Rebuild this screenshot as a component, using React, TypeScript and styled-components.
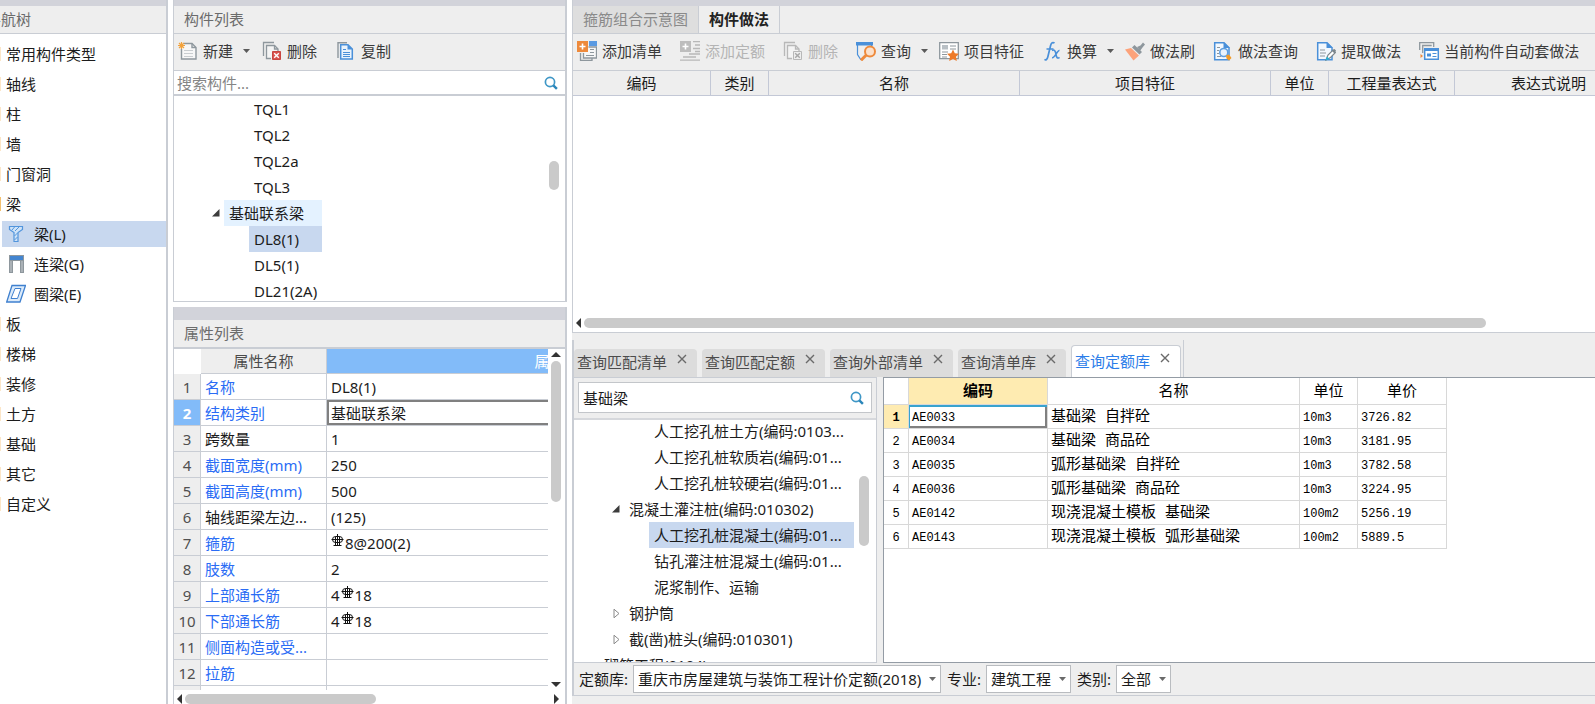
import React from "react";
import styled, { createGlobalStyle, css } from "styled-components";

const sans = `"Noto Sans", "Noto Sans CJK SC", sans-serif`;
const mono = `"Liberation Mono", "Noto Sans CJK SC", monospace`;

const c = {
  strip: "#d2d3da",
  bar: "#eeeeee",
  line: "#c9cdd4",
  lineSoft: "#d6d8dc",
  text: "#1c1c1c",
  muted: "#6b6b6b",
  select: "#c8d8ef",
  thumb: "#cacaca",
  blue: "#4a90d9",
  orange: "#ee8a3c",
  steel: "#8e979d",
};

const Global = createGlobalStyle`
  *, *::before, *::after { box-sizing: border-box; }
  body { margin: 0; background: #fff; color: ${c.text}; font: 15px/20px ${sans}; overflow: hidden; }
  button, input, select { font: inherit; color: inherit; margin: 0; }
  button { border: 0; padding: 0; background: none; white-space: nowrap; }
  h2, ul { margin: 0; padding: 0; list-style: none; font: inherit; }
  svg { display: block; flex: none; }
`;

/* ---------- shell ---------- */

const Workspace = styled.main`
  display: grid;
  grid-template-columns: 168px 394px minmax(0, 1fr);
  gap: 5px;
  height: 100vh;
  overflow: hidden;
`;

const Panel = styled.section`
  display: flex;
  flex-direction: column;
  min-height: 0;
  min-width: 0;
  border: solid ${c.line};
  border-width: 0 2px 0 1px;
  background: #fff;
`;

const NavPanel = styled(Panel)`
  margin-left: -16px;
  border-left: 0;
`;

const Stack = styled.div`
  display: grid;
  grid-template-rows: 302px minmax(0, 1fr);
  gap: 5px;
  min-height: 0;
`;

const ListPanel = styled(Panel)`
  border-bottom-width: 1px;
`;

const Strip = styled.div<{ $tall?: boolean }>`
  flex: none;
  height: ${(p) => (p.$tall ? 13 : 6)}px;
  background: ${c.strip};
`;

const PanelTitle = styled.h2<{ $inset: number }>`
  flex: none;
  height: 28px;
  padding: 3px 0 0 ${(p) => p.$inset}px;
  background: ${c.bar};
  border-bottom: 1px solid ${c.line};
  color: ${c.muted};
  white-space: nowrap;
`;

/* ---------- navigation ---------- */

const NavList = styled.ul`
  display: flex;
  flex-direction: column;
  gap: 4px;
  padding-top: 7px;
`;

const NavItem = styled.button<{ $child?: boolean; $active?: boolean }>`
  display: flex;
  align-items: center;
  gap: ${(p) => (p.$child ? 8 : 5)}px;
  width: ${(p) => (p.$child ? "calc(100% - 18px)" : "100%")};
  height: 26px;
  margin-left: ${(p) => (p.$child ? 18 : 0)}px;
  padding-left: ${(p) => (p.$child ? 4 : 3)}px;
  background: ${(p) => (p.$active ? c.select : "transparent")};
`;

const Folder = styled.span<{ $open?: boolean }>`
  width: 14px;
  height: 14px;
  background: ${(p) => (p.$open ? "#f3c070" : "#fce6c8")};
`;

/* ---------- toolbar ---------- */

const Toolbar = styled.div<{ $gap: number }>`
  flex: none;
  display: flex;
  align-items: center;
  gap: ${(p) => p.$gap}px;
  height: 37px;
  padding: 0 0 2px 4px;
  background: ${c.bar};
  border-bottom: 1px solid ${c.line};
  overflow: hidden;
`;

const ToolButton = styled.button`
  display: flex;
  align-items: center;
  gap: 5px;
  height: 28px;
  color: #3a3a3a;
  &:disabled { color: #b4b4b4; }
`;

const Split = styled.div`
  display: flex;
  align-items: center;
  gap: 10px;
`;

const DropButton = styled.button`
  width: 7px;
  height: 28px;
  margin-right: -7px;
  color: #5a5a5a;
`;

/* ---------- tree ---------- */

const SearchBar = styled.div`
  flex: none;
  display: flex;
  align-items: center;
  height: 25px;
  padding: 0 7px 0 3px;
  border-bottom: 2px solid ${c.line};
`;

const SearchInput = styled.input`
  flex: 1;
  min-width: 0;
  border: 0;
  outline: 0;
  padding: 0;
  background: transparent;
  &::placeholder { color: #858585; opacity: 1; }
`;

const Scroller = styled.div`
  flex: 1;
  display: flex;
  min-height: 0;
  overflow: hidden;
`;

const TreeArea = styled.div`
  flex: 1;
  min-width: 0;
`;

const Tree = styled.ul<{ $fit?: boolean }>`
  width: ${(p) => (p.$fit ? "fit-content" : "100%")};
  margin-top: ${(p) => (p.$fit ? 0 : -2)}px;
`;

const TreeRow = styled.li<{ $level: number }>`
  display: flex;
  align-items: center;
  height: 26px;
  padding-left: ${(p) => p.$level * 25 - 16}px;
`;

const Toggle = styled.span`
  flex: none;
  width: 16px;
  display: flex;
  justify-content: center;
`;

const TreeLabel = styled.button<{ $state?: "active" | "hover" }>`
  flex: 1;
  height: 26px;
  padding: 0 5px;
  text-align: left;
  background: ${(p) => (p.$state === "active" ? c.select : p.$state === "hover" ? "#e4f2ff" : "transparent")};
`;

/* ---------- scrollbars ---------- */

const VTrack = styled.div<{ $w: number; $before: number; $inset?: number }>`
  flex: none;
  display: flex;
  flex-direction: column;
  width: ${(p) => p.$w}px;
  padding: ${(p) => p.$before}px 0 3px ${(p) => p.$inset ?? 0}px;
`;

const VThumb = styled.span<{ $len: number }>`
  width: 10px;
  height: ${(p) => p.$len}px;
  border-radius: 5px;
  background: ${c.thumb};
`;

const ThumbSlot = styled.div`
  flex: 1;
  padding-top: 4px;
  > span { display: block; }
`;

const Spring = styled.span`
  flex: 1;
`;

const HTrack = styled.div<{ $top?: number }>`
  flex: none;
  display: flex;
  align-items: flex-start;
  gap: 3px;
  height: 14px;
  padding: ${(p) => p.$top ?? 0}px 6px 0 3px;
`;

const HThumb = styled.span<{ $w: string }>`
  width: ${(p) => p.$w};
  height: 10px;
  border-radius: 5px;
  background: ${c.thumb};
`;

/* ---------- property table ---------- */

const PropBody = styled.div`
  flex: 1;
  display: flex;
  min-height: 0;
  border-top: 1px solid ${c.line};
`;

const Clip = styled.div`
  flex: 1;
  min-width: 0;
  overflow: hidden;
`;

const PropTable = styled.table`
  table-layout: fixed;
  width: 614px;
  border-collapse: separate;
  border-spacing: 0;
  th, td {
    height: 26px;
    padding: 0 0 0 4px;
    border: solid ${c.line};
    border-width: 0 1px 1px 0;
    text-align: left;
    font-weight: 400;
    white-space: nowrap;
  }
  thead th { height: 25px; padding: 0; text-align: center; background: ${c.bar}; color: #4a4a4a; }
  thead th:first-child { background: #fff; border-color: #fff; }
  thead th:last-child { background: #82bbf9; color: #fff; }
`;

const RowNo = styled.th<{ $active?: boolean }>`
  && {
    padding: 0;
    text-align: center;
    color: #505050;
    background: ${c.bar};
    ${(p) => p.$active && css`background: #82bbf9; color: #fff; font-weight: 700;`}
  }
`;

const PropName = styled.td<{ $plain?: boolean }>`
  color: ${(p) => (p.$plain ? c.text : "#2a6cf5")};
`;

const PropValue = styled.td<{ $focus?: boolean }>`
  ${(p) => p.$focus && css`box-shadow: inset 0 0 0 2px #808080;`}
`;

const BarText = styled.span`
  display: flex;
  align-items: flex-start;
  gap: 1px;
`;

/* ---------- right side ---------- */

const RightStack = styled.div`
  display: flex;
  flex-direction: column;
  min-width: 0;
  min-height: 0;
  background: ${c.bar};
`;

const UpperPanel = styled(Panel)`
  flex: 0 0 333px;
  border-width: 0 0 1px 1px;
`;

const ViewTabs = styled.div`
  flex: none;
  display: flex;
  height: 28px;
  background: ${c.bar};
  border-bottom: 1px solid ${c.line};
`;

const ViewTab = styled.button<{ $active?: boolean }>`
  height: 27px;
  padding: 0 10px 2px;
  border-right: 1px solid ${c.line};
  background: ${(p) => (p.$active ? c.bar : "#dedede")};
  color: ${(p) => (p.$active ? "#222" : "#8a8a8a")};
  font-weight: ${(p) => (p.$active ? 600 : 400)};
`;

const MethodTable = styled.table`
  table-layout: fixed;
  width: 1070px;
  border-collapse: separate;
  border-spacing: 0;
  th {
    height: 25px;
    padding: 0;
    border: solid #c3c8d6;
    border-width: 0 1px 1px 0;
    background: ${c.bar};
    font-weight: 400;
  }
`;

const LowerPanel = styled.section`
  flex: 1;
  display: flex;
  flex-direction: column;
  min-height: 0;
  margin: 7px 0 8px;
  border-left: 2px solid ${c.line};
  border-bottom: 1px solid ${c.line};
`;

const QueryTabs = styled.div`
  flex: none;
  display: flex;
  align-items: flex-end;
  gap: 5px;
  height: 37px;
`;

const QueryTab = styled.div<{ $active?: boolean }>`
  display: flex;
  align-items: center;
  gap: 10px;
  height: ${(p) => (p.$active ? 32 : 28)}px;
  padding: 0 10px 2px 3px;
  border-radius: 4px 4px 0 0;
  background: ${(p) => (p.$active ? "#fff" : "#dcdcdc")};
  color: ${(p) => (p.$active ? "#2b7de9" : "#4c4c4c")};
  ${(p) => p.$active && css`border: solid ${c.line}; border-width: 1px 1px 0;`}
`;

const CloseButton = styled.button`
  height: 16px;
  padding-bottom: 6px;
  color: #6a6a6a;
`;

const TabEnd = styled.span`
  align-self: stretch;
  width: 1px;
  margin-left: -3px;
  background: ${c.line};
`;

const QueryBody = styled.div`
  flex: 1;
  display: grid;
  grid-template-columns: 303px minmax(0, 1fr);
  gap: 6px;
  min-height: 0;
`;

const SidePane = styled.div`
  display: flex;
  flex-direction: column;
  min-height: 0;
  border: solid ${c.line};
  border-width: 1px 1px 1px 0;
  background: #fff;
`;

const SearchHolder = styled.div`
  flex: none;
  height: 42px;
  padding: 4px 4px 6px;
  background: ${c.bar};
  border-bottom: 2px solid ${c.lineSoft};
`;

const SearchBox = styled.div`
  display: flex;
  align-items: center;
  height: 31px;
  padding: 0 7px 0 4px;
  border: 1px solid #c3c6ca;
  background: #fff;
`;

const ResultPane = styled.div`
  min-width: 0;
  overflow: hidden;
  border: solid #949ca5;
  border-width: 1px 0 1px 1px;
  background: #fff;
`;

const ResultTable = styled.table`
  table-layout: fixed;
  width: 563px;
  border-collapse: separate;
  border-spacing: 0;
  color: #000;
  font-family: ${mono};
  th, td {
    height: 24px;
    padding: 2px 0 0 3px;
    border: solid #d8d8d8;
    border-width: 0 1px 1px 0;
    text-align: left;
    font-weight: 400;
    white-space: nowrap;
  }
  thead th { height: 27px; padding: 3px 0 0; text-align: center; }
`;

const HotHead = styled.th`
  && { background: #feebb1; font-weight: 700; }
`;

const ResultNo = styled.th<{ $active?: boolean }>`
  && {
    padding: 2px 0 0;
    text-align: center;
    font-size: 12px;
    ${(p) => p.$active && css`background: #feebb1; font-weight: 700;`}
  }
`;

const Code = styled.td<{ $focus?: boolean }>`
  font-size: 12px;
  ${(p) =>
    p.$focus &&
    css`box-shadow: inset 1px 2px 0 #38a3cf, inset -2px -2px 0 #808080;`}
`;

const Footer = styled.div`
  flex: none;
  display: flex;
  align-items: center;
  gap: 6px;
  height: 32px;
  padding-left: 5px;
`;

const Field = styled.label`
  display: flex;
  align-items: center;
  gap: 5px;
`;

const SelectWrap = styled.span`
  display: grid;
  align-items: center;
  > * { grid-area: 1 / 1; }
  > svg { justify-self: end; margin-right: 5px; color: #6a6a6a; pointer-events: none; }
`;

const Select = styled.select`
  appearance: none;
  height: 28px;
  padding: 0 18px 0 4px;
  border: 1px solid #b9bcc0;
  border-radius: 0;
  background: #fff;
`;

/* ---------- drawings ---------- */

const Svg = ({ w = 20, h = w, children }: { w?: number; h?: number; children: React.ReactNode }) => (
  <svg width={w} height={h} viewBox={`0 0 ${w} ${h}`} fill="none" aria-hidden="true">
    {children}
  </svg>
);

const Caret = () => <Svg w={7} h={4}><path d="M0 0h7L3.5 4z" fill="currentColor" /></Svg>;
const Cross = () => <Svg w={10}><path d="M1 1l8 8M9 1L1 9" stroke="currentColor" strokeWidth="1.4" /></Svg>;
const Magnifier = () => (
  <Svg w={14}>
    <circle cx="6" cy="6" r="4.6" stroke="#3f97c6" strokeWidth="1.7" />
    <path d="M9.3 9.3l3.6 3.6" stroke="#2a86ba" strokeWidth="2.4" />
  </Svg>
);
const Opened = () => <Svg w={8}><path d="M7.5 0v7.5H0z" fill="#3c3c3c" /></Svg>;
const Closed = () => <Svg w={7} h={11}><path d="M1 1.2v8.6l5-4.3z" stroke="#8a8a8a" /></Svg>;
const ArrowUp = () => <Svg w={10} h={5}><path d="M0 5L5 0l5 5z" fill="#333" /></Svg>;
const ArrowDown = () => <Svg w={10} h={5}><path d="M0 0l5 5 5-5z" fill="#333" /></Svg>;
const ArrowLeft = () => <Svg w={5} h={10}><path d="M5 0L0 5l5 5z" fill="#333" /></Svg>;
const ArrowRight = () => <Svg w={5} h={10}><path d="M0 0l5 5-5 5z" fill="#333" /></Svg>;

const Rebar = () => (
  <Svg w={13} h={16}>
    <rect x="1.5" y="3.5" width="10" height="6" rx="3" stroke="#111" />
    <path d="M4.5 3.5v9M8.5 3.5v9M6.5 1v11M0.5 6.5h12M2.5 12.5h8" stroke="#111" />
  </Svg>
);

const NewIcon = () => (
  <Svg>
    <path d="M5.5 2.5H14l4 4V18H3.5V8" fill="#f7f7f7" stroke={c.steel} strokeWidth="1.4" />
    <path d="M14 2.5v4h4" stroke={c.steel} strokeWidth="1.4" />
    <path d="M6 9.5h9M6 12.5h9M6 15.5h9" stroke="#c9cdd0" />
    <path d="M3.5 1v7M0 4.5h7M1 2l5 5M6 2L1 7" stroke="#f2a23c" strokeWidth="1.2" />
  </Svg>
);
const DeleteIcon = ({ off }: { off?: boolean }) => {
  const s = off ? "#b8b8b8" : c.steel;
  return (
    <Svg>
      <path d="M1.5 15V1.5H12" stroke={s} strokeWidth="1.3" />
      <path d="M9 17.5H4.5v-13h8l3.5 3.5v2" fill="#f4f4f4" stroke={s} strokeWidth="1.3" />
      <path d="M12.5 4.5V8H16" stroke={s} strokeWidth="1.3" />
      <path d="M10.5 10.5h8v8h-8z" fill={off ? "#eee" : "#d8524e"} stroke={off ? s : "#c84541"} />
      <path d="M12.2 12.2l4.6 4.6M16.8 12.2l-4.6 4.6" stroke={off ? "#a8a8a8" : "#fff"} strokeWidth="1.4" />
    </Svg>
  );
};
const CopyIcon = () => (
  <Svg>
    <path d="M2 17V1.7h9" stroke={c.steel} strokeWidth="1.4" />
    <path d="M4.7 3.7H12l4.3 4.3v10H4.7z" fill="#eaf3fc" stroke={c.blue} strokeWidth="1.5" />
    <path d="M11.5 3.5v5h5z" fill={c.blue} />
    <path d="M7 8.5h3M7 11.5h7M7 13.5h7M7 15.5h7" stroke={c.blue} />
  </Svg>
);
const AddListIcon = () => (
  <Svg>
    <path d="M3.5 12v7.5H15V17" stroke={c.steel} strokeWidth="1.3" />
    <path d="M6.5 12v5h13V6h-8" fill="#f7f7f7" stroke={c.steel} strokeWidth="1.3" />
    <path d="M13 8.5h4M13 11.5h4M9 14.5h8" stroke={c.steel} />
    <path d="M0 0h11v11H0z" fill={c.orange} />
    <path d="M12 0h8v5h-8z" fill="#5a9ae2" />
    <path d="M5.5 2.5v6M2.5 5.5h6" stroke="#fff" strokeWidth="1.6" />
  </Svg>
);
const AddQuotaIcon = () => (
  <Svg>
    <path d="M0 0h11v11H0z" fill="#bdbdbd" />
    <path d="M5.5 2.5v6M2.5 5.5h6" stroke="#fff" strokeWidth="1.6" />
    <path d="M13 .7h7M15 4h5M13 7.500h7M15 10.500h5M9 13h11M3 16h13M0 19.200h20" stroke="#b8b8b8" strokeWidth="1.3" />
  </Svg>
);
const QueryIcon = () => (
  <Svg>
    <path d="M1.5 4v9.5L5 19M15.5 4v2" stroke={c.blue} strokeWidth="1.2" />
    <path d="M0 1h17v3.5H0z" fill={c.blue} />
    <circle cx="14" cy="10.5" r="5" fill="#fbe1cc" stroke={c.orange} strokeWidth="2" />
    <path d="M10.3 14L5 19.3" stroke={c.orange} strokeWidth="3" />
  </Svg>
);
const FeatureIcon = () => (
  <Svg>
    <path d="M.7 1.7h18.6v16H.7z" fill="#fff" stroke={c.steel} strokeWidth="1.3" />
    <path d="M3 4h6v4.5H3z" fill="#b9c0c5" />
    <path d="M11 5h6M11 8h6M3 11h6M3 13.5h5M3 16h5" stroke={c.steel} />
    <path d="M14 8.5l1.8 3.8 4.2.5-3 2.9.8 4.2-3.8-2-3.8 2 .8-4.2-3-2.9 4.2-.5z" fill="#ee7a28" />
  </Svg>
);
const FxIcon = () => (
  <Svg>
    <path d="M12.5 2.2C11 .8 9.3 1.6 8.6 4.5L5.8 16c-.6 2.4-1.9 3.4-3.3 2.4M4.5 8h7" stroke={c.blue} strokeWidth="1.7" />
    <path d="M10 9.5c2.5-1.5 3.5.8 4 3.8s1.3 4.8 3.5 3M17.5 9.5c-2.5-.5-4 7.5-7.5 7.2" stroke={c.blue} strokeWidth="1.6" />
  </Svg>
);
const BrushIcon = () => (
  <Svg>
    <path d="M0 8.5L6 7l8 7.5-5.500 5z" fill="#fca27a" />
    <path d="M7 6.5L9.500 4l7.500 7-2.500 2.500z" fill={c.steel} />
    <path d="M12 6l3.500-1.500 2.500-3 2 2-2.500 3L15 10z" fill={c.steel} />
  </Svg>
);
const Doc = () => (
  <>
    <path d="M1.7 1.7H11l5 5v12H1.7z" fill="#f3f8fd" stroke={c.blue} strokeWidth="1.5" />
    <path d="M10.5 1v6H17z" fill={c.blue} />
  </>
);
const MethodQueryIcon = () => (
  <Svg>
    <Doc />
    <path d="M4 6.5h3M4 9.5h2M4 12.5h2M4 15.5h4" stroke={c.steel} />
    <circle cx="10.8" cy="11.5" r="4" fill="#e8f2fc" stroke="#5f9fe0" strokeWidth="1.6" />
    <path d="M13 14.5l3-1 2.5 3.5-2.5 2.5-2.5-2z" fill="#f29a26" />
  </Svg>
);
const ExtractIcon = () => (
  <Svg>
    <Doc />
    <path d="M4 9h5M4 12h6M4 15h5" stroke={c.steel} />
    <path d="M10 19l2-5 5-5 2.5 2.5-5 5z" fill="#fff" stroke="#7d868c" strokeWidth="1.2" />
    <path d="M15.5 9.5l3 3L20 9.500 18.500 8z" fill="#7d868c" />
    <path d="M9.5 19.5l1.5-4 2.5 2.5z" fill="#27b3d3" />
  </Svg>
);
const AutoIcon = () => (
  <Svg>
    <path d="M.7 9V1.7h14V6M3.7 12V4.5h9" stroke={c.steel} strokeWidth="1.3" />
    <path d="M1.5 13L4 15l-2.500 2z" fill={c.orange} />
    <path d="M5.7 7.7h13.600v10.600H5.700z" fill="#fff" stroke={c.blue} strokeWidth="1.5" />
    <path d="M5.5 7.5h14V10h-14z" fill={c.blue} />
    <path d="M8 12.5h4v3H8z" fill={c.blue} />
    <path d="M13.5 12.5h4M13.5 15.5h4" stroke={c.blue} />
  </Svg>
);
const BeamIcon = () => (
  <Svg>
    <path d="M3.5 2.5h13v3l-4.500 3v9H8v-9l-4.500-3z" fill="#cfe3f8" stroke="#5295dc" strokeWidth="1.2" />
    <path d="M6 6l3-3.500M9 7l4.500-4.500M8.500 12l3-3M8.500 16l3-3" stroke="#5295dc" />
  </Svg>
);
const LinkBeamIcon = () => (
  <Svg>
    <path d="M3 1h15v18h-4V7H7v12H3z" fill={c.steel} />
    <path d="M4.500 7H5.500v11H4.500zM15.500 7h1v11h-1z" fill="#c5cbcf" />
    <path d="M4 2h13v4H4z" fill="#4385d0" />
  </Svg>
);
const RingBeamIcon = () => (
  <Svg>
    <path d="M6 1.500h13.500L14 18H.700z" fill="#dcebfa" stroke="#3f80cf" strokeWidth="1.3" />
    <path d="M9 4.500h6L11.500 14.500H5z" fill="#fff" stroke="#3f80cf" />
  </Svg>
);

/* ---------- data ---------- */

type Nav = { label: string; open?: boolean; icon?: React.ReactNode; active?: boolean };
const navItems: Nav[] = [
  { label: "常用构件类型" },
  { label: "轴线" },
  { label: "柱" },
  { label: "墙" },
  { label: "门窗洞" },
  { label: "梁", open: true },
  { label: "梁(L)", icon: <BeamIcon />, active: true },
  { label: "连梁(G)", icon: <LinkBeamIcon /> },
  { label: "圈梁(E)", icon: <RingBeamIcon /> },
  { label: "板" },
  { label: "楼梯" },
  { label: "装修" },
  { label: "土方" },
  { label: "基础" },
  { label: "其它" },
  { label: "自定义" },
];

type Node = { label: string; level: number; toggle?: "open" | "closed"; state?: "active" | "hover" };
const members: Node[] = [
  { label: "TQL1", level: 3 },
  { label: "TQL2", level: 3 },
  { label: "TQL2a", level: 3 },
  { label: "TQL3", level: 3 },
  { label: "基础联系梁", level: 2, toggle: "open", state: "hover" },
  { label: "DL8(1)", level: 3, state: "active" },
  { label: "DL5(1)", level: 3 },
  { label: "DL21(2A)", level: 3 },
];
const quotas: Node[] = [
  { label: "人工挖孔桩土方(编码:0103...", level: 3 },
  { label: "人工挖孔桩软质岩(编码:01...", level: 3 },
  { label: "人工挖孔桩较硬岩(编码:01...", level: 3 },
  { label: "混凝土灌注桩(编码:010302)", level: 2, toggle: "open" },
  { label: "人工挖孔桩混凝土(编码:01...", level: 3, state: "active" },
  { label: "钻孔灌注桩混凝土(编码:01...", level: 3 },
  { label: "泥浆制作、运输", level: 3 },
  { label: "钢护筒", level: 2, toggle: "closed" },
  { label: "截(凿)桩头(编码:010301)", level: 2, toggle: "closed" },
  { label: "砌筑工程(0104)", level: 1 },
];

const props: { name: string; value: React.ReactNode; plain?: boolean }[] = [
  { name: "名称", value: "DL8(1)" },
  { name: "结构类别", value: "基础联系梁" },
  { name: "跨数量", value: "1", plain: true },
  { name: "截面宽度(mm)", value: "250" },
  { name: "截面高度(mm)", value: "500" },
  { name: "轴线距梁左边...", value: "(125)", plain: true },
  { name: "箍筋", value: <BarText><Rebar />8@200(2)</BarText> },
  { name: "肢数", value: "2" },
  { name: "上部通长筋", value: <BarText>4<Rebar />18</BarText> },
  { name: "下部通长筋", value: <BarText>4<Rebar />18</BarText> },
  { name: "侧面构造或受...", value: "" },
  { name: "拉筋", value: "" },
  { name: "", value: "" },
];

const results = [
  ["AE0033", "基础梁 自拌砼", "10m3", "3726.82"],
  ["AE0034", "基础梁 商品砼", "10m3", "3181.95"],
  ["AE0035", "弧形基础梁 自拌砼", "10m3", "3782.58"],
  ["AE0036", "弧形基础梁 商品砼", "10m3", "3224.95"],
  ["AE0142", "现浇混凝土模板 基础梁", "100m2", "5256.19"],
  ["AE0143", "现浇混凝土模板 弧形基础梁", "100m2", "5889.5"],
];

const methodColumns: [string, number][] = [
  ["编码", 138],
  ["类别", 58],
  ["名称", 251],
  ["项目特征", 251],
  ["单位", 58],
  ["工程量表达式", 126],
  ["表达式说明", 188],
];

const queryTabs = ["查询匹配清单", "查询匹配定额", "查询外部清单", "查询清单库", "查询定额库"];

/* ---------- composed parts ---------- */

const Tool = ({ icon, label, disabled, menu }: { icon: React.ReactNode; label: string; disabled?: boolean; menu?: boolean }) => {
  const button = (
    <ToolButton type="button" disabled={disabled}>
      {icon}
      {label}
    </ToolButton>
  );
  if (!menu) return button;
  return (
    <Split>
      {button}
      <DropButton type="button" aria-label={`${label}菜单`}><Caret /></DropButton>
    </Split>
  );
};

const TreeView = ({ nodes, fit }: { nodes: Node[]; fit?: boolean }) => (
  <Tree $fit={fit}>
    {nodes.map((n) => (
      <TreeRow key={n.label} $level={n.level}>
        <Toggle>{n.toggle === "open" ? <Opened /> : n.toggle === "closed" ? <Closed /> : null}</Toggle>
        <TreeLabel type="button" $state={n.state}>{n.label}</TreeLabel>
      </TreeRow>
    ))}
  </Tree>
);

const Picker = ({ label, value }: { label: string; value: string }) => (
  <Field>
    {label}
    <SelectWrap>
      <Select defaultValue={value}><option>{value}</option></Select>
      <Caret />
    </SelectWrap>
  </Field>
);

export default function App() {
  return (
    <>
      <Global />
      <Workspace>
        <NavPanel>
          <Strip />
          <PanelTitle $inset={2}>导航树</PanelTitle>
          <NavList>
            {navItems.map((n) => (
              <li key={n.label}>
                <NavItem type="button" $child={!!n.icon} $active={n.active}>
                  {n.icon ?? <Folder $open={n.open} />}
                  {n.label}
                </NavItem>
              </li>
            ))}
          </NavList>
        </NavPanel>

        <Stack>
          <ListPanel>
            <Strip />
            <PanelTitle $inset={10}>构件列表</PanelTitle>
            <Toolbar $gap={19}>
              <Tool icon={<NewIcon />} label="新建" menu />
              <Tool icon={<DeleteIcon />} label="删除" />
              <Tool icon={<CopyIcon />} label="复制" />
            </Toolbar>
            <SearchBar>
              <SearchInput aria-label="搜索构件" placeholder="搜索构件..." />
              <Magnifier />
            </SearchBar>
            <Scroller>
              <TreeArea><TreeView nodes={members} fit /></TreeArea>
              <VTrack $w={16} $before={65}><VThumb $len={29} /></VTrack>
            </Scroller>
          </ListPanel>

          <Panel>
            <Strip $tall />
            <PanelTitle $inset={10}>属性列表</PanelTitle>
            <PropBody>
              <Clip>
                <PropTable>
                  <colgroup>
                    <col width="27" />
                    <col width="126" />
                    <col width="461" />
                  </colgroup>
                  <thead>
                    <tr>
                      <th />
                      <th>属性名称</th>
                      <th>属性值</th>
                    </tr>
                  </thead>
                  <tbody>
                    {props.map((p, i) => (
                      <tr key={i}>
                        <RowNo $active={i === 1}>{p.name && i + 1}</RowNo>
                        <PropName $plain={p.plain}>{p.name}</PropName>
                        <PropValue $focus={i === 1}>{p.value}</PropValue>
                      </tr>
                    ))}
                  </tbody>
                </PropTable>
              </Clip>
              <VTrack $w={17} $before={3} $inset={3}>
                <ArrowUp />
                <ThumbSlot><VThumb $len={141} /></ThumbSlot>
                <ArrowDown />
              </VTrack>
            </PropBody>
            <HTrack $top={4}>
              <ArrowLeft />
              <HThumb $w="191px" />
              <Spring />
              <ArrowRight />
            </HTrack>
          </Panel>
        </Stack>

        <RightStack>
          <UpperPanel>
            <Strip />
            <ViewTabs>
              <ViewTab type="button">箍筋组合示意图</ViewTab>
              <ViewTab type="button" $active>构件做法</ViewTab>
            </ViewTabs>
            <Toolbar $gap={18}>
              <Tool icon={<AddListIcon />} label="添加清单" />
              <Tool icon={<AddQuotaIcon />} label="添加定额" disabled />
              <Tool icon={<DeleteIcon off />} label="删除" disabled />
              <Tool icon={<QueryIcon />} label="查询" menu />
              <Tool icon={<FeatureIcon />} label="项目特征" />
              <Tool icon={<FxIcon />} label="换算" menu />
              <Tool icon={<BrushIcon />} label="做法刷" />
              <Tool icon={<MethodQueryIcon />} label="做法查询" />
              <Tool icon={<ExtractIcon />} label="提取做法" />
              <Tool icon={<AutoIcon />} label="当前构件自动套做法" />
            </Toolbar>
            <Clip>
              <MethodTable>
                <colgroup>
                  {methodColumns.map(([name, w]) => <col key={name} width={w} />)}
                </colgroup>
                <thead>
                  <tr>{methodColumns.map(([name]) => <th key={name}>{name}</th>)}</tr>
                </thead>
              </MethodTable>
            </Clip>
            <HTrack>
              <ArrowLeft />
              <HThumb $w="89%" />
            </HTrack>
          </UpperPanel>

          <LowerPanel>
            <QueryTabs>
              {queryTabs.map((t, i) => (
                <QueryTab key={t} $active={i === 4}>
                  <button type="button">{t}</button>
                  <CloseButton type="button" aria-label={`关闭${t}`}><Cross /></CloseButton>
                </QueryTab>
              ))}
              <TabEnd />
            </QueryTabs>
            <QueryBody>
              <SidePane>
                <SearchHolder>
                  <SearchBox>
                    <SearchInput aria-label="搜索定额" defaultValue="基础梁" />
                    <Magnifier />
                  </SearchBox>
                </SearchHolder>
                <Scroller>
                  <TreeArea><TreeView nodes={quotas} /></TreeArea>
                  <VTrack $w={22} $before={56} $inset={5}><VThumb $len={70} /></VTrack>
                </Scroller>
              </SidePane>
              <ResultPane>
                <ResultTable>
                  <colgroup>
                    <col width="25" />
                    <col width="139" />
                    <col width="252" />
                    <col width="58" />
                    <col width="89" />
                  </colgroup>
                  <thead>
                    <tr>
                      <th />
                      <HotHead>编码</HotHead>
                      <th>名称</th>
                      <th>单位</th>
                      <th>单价</th>
                    </tr>
                  </thead>
                  <tbody>
                    {results.map(([code, name, unit, price], i) => (
                      <tr key={code}>
                        <ResultNo $active={i === 0}>{i + 1}</ResultNo>
                        <Code $focus={i === 0}>{code}</Code>
                        <td>{name}</td>
                        <Code>{unit}</Code>
                        <Code>{price}</Code>
                      </tr>
                    ))}
                  </tbody>
                </ResultTable>
              </ResultPane>
            </QueryBody>
            <Footer>
              <Picker label="定额库:" value="重庆市房屋建筑与装饰工程计价定额(2018)" />
              <Picker label="专业:" value="建筑工程" />
              <Picker label="类别:" value="全部" />
            </Footer>
          </LowerPanel>
        </RightStack>
      </Workspace>
    </>
  );
}
